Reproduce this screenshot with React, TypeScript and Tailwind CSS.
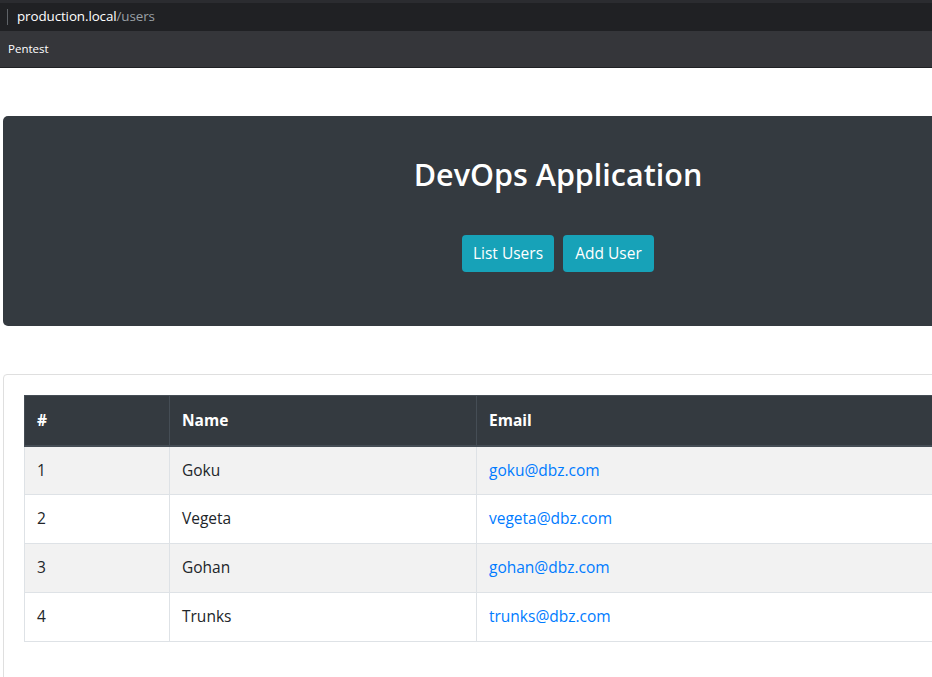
const users = [
  { id: 1, name: "Goku", email: "goku@dbz.com" },
  { id: 2, name: "Vegeta", email: "vegeta@dbz.com" },
  { id: 3, name: "Gohan", email: "gohan@dbz.com" },
  { id: 4, name: "Trunks", email: "trunks@dbz.com" },
];

const font = { fontFamily: '"Open Sans", "Noto Sans", sans-serif' };

export default function App() {
  return (
    <div className="w-[932px] h-[677px] overflow-hidden bg-white" style={font}>
      {/* browser address bar */}
      <div className="h-[31px] bg-[#202124] border-t-[3px] border-[#2b2c30] flex items-center">
        <div className="ml-[7px] w-px h-[16px] bg-[#5f6368]" />
        <div className="ml-[9px] text-[13.4px] leading-none text-white tracking-[-0.1px]">
          production.local<span className="text-[#9aa0a6]">/users</span>
        </div>
      </div>
      {/* bookmarks bar */}
      <div className="h-[37px] bg-[#35363a] border-b border-[#202124] flex items-center px-[8px]">
        <span className="text-[11.5px] text-white leading-none">Pentest</span>
      </div>

      {/* page */}
      <div className="w-[1120px] pt-[48px] pl-[3px]">
        <div className="w-[1110px] h-[210px] bg-[#343a40] rounded-[5px] flex flex-col items-center pt-[38px]">
          <h1 className="text-[30.5px] leading-[40px] font-semibold text-white">DevOps Application</h1>
          <div className="flex gap-[9px] mt-[41px]">
            <button className="w-[92px] h-[37px] rounded-[4px] bg-[#17a2b8] text-white text-[15.5px] leading-none pt-px">List Users</button>
            <button className="w-[91px] h-[37px] rounded-[4px] bg-[#17a2b8] text-white text-[15.5px] leading-none pt-px">Add User</button>
          </div>
        </div>

        <div className="mt-[48px] w-[1110px] h-[320px] border border-[#dfdfdf] rounded-[4px] p-[20px]">
          <table className="w-full border-collapse text-[15.5px] text-[#212529]">
            <thead>
              <tr className="bg-[#343a40] text-white h-[50px]">
                <th className="w-[145px] text-left font-bold px-[12px] border border-[#454d55] border-b-2">#</th>
                <th className="w-[307px] text-left font-bold px-[12px] border border-[#454d55] border-b-2">Name</th>
                <th className="text-left font-bold px-[12px] border border-[#454d55] border-b-2">Email</th>
              </tr>
            </thead>
            <tbody>
              {users.map((u, i) => (
                <tr key={u.id} className={i % 2 === 0 ? "bg-[#f2f2f2] h-[49px]" : "bg-white h-[49px]"}>
                  <td className="px-[12px] border border-[#dee2e6]">{u.id}</td>
                  <td className="px-[12px] border border-[#dee2e6]">{u.name}</td>
                  <td className="px-[12px] border border-[#dee2e6]">
                    <a className="text-[#007bff]">{u.email}</a>
                  </td>
                </tr>
              ))}
            </tbody>
          </table>
        </div>
      </div>
    </div>
  );
}
